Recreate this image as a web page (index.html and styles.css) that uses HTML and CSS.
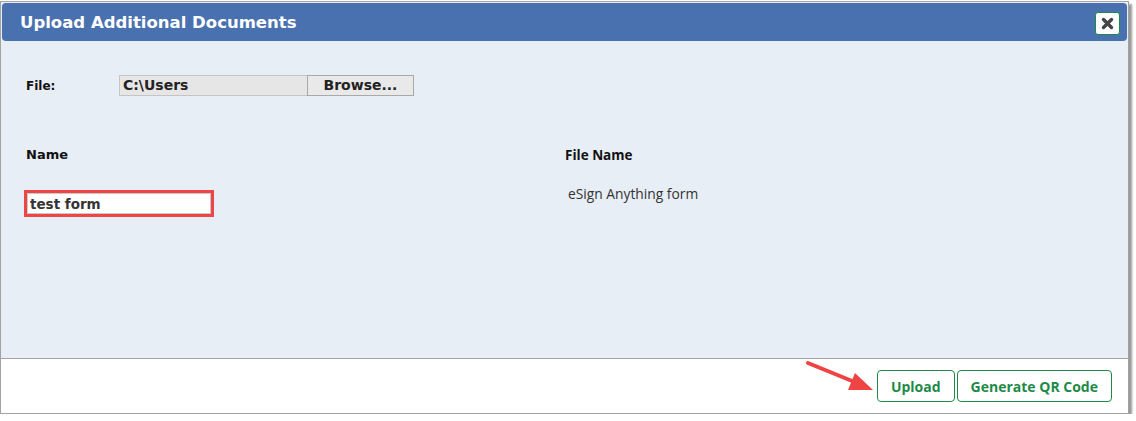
FILE: index.html
```html
<!DOCTYPE html>
<html lang="en">
<head>
    <meta charset="UTF-8">
    <title>Upload Additional Documents</title>
    <link rel="stylesheet" href="styles.css">
</head>
<body>
    <div class="dialog">
        <div class="dialog-header">
            <h1>Upload Additional Documents</h1>
            <button class="btn-close" title="Close">
                <svg width="13" height="13" viewBox="0 0 13 13">
                    <path d="M2.5 2.5 L10.5 10.5 M10.5 2.5 L2.5 10.5" stroke="#454545" stroke-width="3.4" stroke-linecap="round"/>
                </svg>
            </button>
        </div>

        <div class="dialog-body">
            <div class="file-row">
                <label class="file-label">File:</label>
                <div class="file-input">
                    <span class="file-path">C:\Users</span>
                    <span class="btn-browse">Browse...</span>
                </div>
            </div>

            <div class="doc-grid">
                <div class="doc-col">
                    <h3 class="col-title">Name</h3>
                    <div class="highlight">
                        <input type="text" class="name-input" value="test form">
                    </div>
                </div>
                <div class="doc-col">
                    <h3 class="col-title col-title-alt">File Name</h3>
                    <p class="file-name">eSign Anything form</p>
                </div>
            </div>
        </div>

        <div class="dialog-footer">
            <!-- callout arrow pointing at the upload button -->
            <svg class="callout" width="80" height="40" viewBox="0 0 80 40">
                <line x1="3" y1="3" x2="52" y2="23" stroke="#ef4444" stroke-width="4" stroke-linecap="round"/>
                <polygon points="68,30 50,13 43,30" fill="#ef4444"/>
            </svg>
            <button class="btn-action">Upload</button>
            <button class="btn-action">Generate QR Code</button>
        </div>
    </div>
</body>
</html>
```

FILE: styles.css
```css
/* Dialog screenshot styling */
body {
    margin: 0;
    background-color: #ffffff;
    font-family: "DejaVu Sans", Verdana, sans-serif;
}

.dialog {
    box-sizing: border-box;
    width: 1129px;
    height: 413px;
    margin-top: 1px;
    padding: 1px;
    border: 1px solid #a3a3a3;
    background-color: #e8eef6;
    box-shadow: 3px 3px 2px rgba(0, 0, 0, 0.4);
    display: flex;
    flex-direction: column;
}

.dialog-header {
    height: 38px;
    background-color: #4a71af;
    border-radius: 4px;
    padding: 0 7px 0 18px;
    display: flex;
    align-items: center;
    justify-content: space-between;
}

.dialog-header h1 {
    margin: 1px 0 0 0;
    color: #ffffff;
    font-size: 16.5px;
    font-weight: bold;
}

.btn-close {
    box-sizing: border-box;
    width: 25px;
    height: 23px;
    margin-top: 2px;
    padding: 0;
    background-color: #ffffff;
    border: 1px solid #1e8a47;
    border-radius: 3px;
    display: flex;
    align-items: center;
    justify-content: center;
}

.dialog-body {
    flex: 1;
    padding: 34px 24px 0 24px;
}

.file-row {
    display: flex;
    align-items: center;
}

.file-label {
    width: 93px;
    font-size: 12px;
    font-weight: bold;
    color: #111;
}

.file-input {
    display: flex;
    height: 21px;
    font-size: 14px;
    font-weight: bold;
    color: #222;
}

.file-path {
    box-sizing: border-box;
    width: 188px;
    padding-left: 3px;
    line-height: 19px;
    background-color: #e6e6e6;
    border: 1px solid #c4c4c4;
    border-right: none;
}

.btn-browse {
    box-sizing: border-box;
    width: 107px;
    line-height: 19px;
    text-align: center;
    background-color: #e9e9e9;
    border: 1px solid #a9a9a9;
}

.doc-grid {
    display: grid;
    grid-template-columns: 539px 1fr;
    margin-top: 51px;
}

.col-title {
    margin: 0;
    font-size: 13px;
    line-height: 16px;
    font-weight: bold;
    color: #111;
}

.col-title-alt {
    font-family: "Open Sans", sans-serif;
    font-size: 13.5px;
}

.highlight {
    display: inline-block;
    margin: 27px 0 0 -2px;
    border: 3px solid #f04545;
}

.name-input {
    box-sizing: border-box;
    display: block;
    width: 184px;
    height: 21px;
    margin: 0;
    padding: 0 0 0 2px;
    border: 1px solid #c9c9c9;
    background-color: #ffffff;
    font-family: "DejaVu Sans", Verdana, sans-serif;
    font-size: 13.5px;
    font-weight: bold;
    color: #333;
}

.file-name {
    margin: 21px 0 0 3px;
    font-family: "Open Sans", sans-serif;
    font-size: 13.8px;
    color: #333;
}

.dialog-footer {
    position: relative;
    height: 55px;
    border-top: 1px solid #a3a3a3;
    background-color: #ffffff;
    display: flex;
    align-items: flex-start;
    justify-content: flex-end;
    gap: 2px;
    padding: 11px 16px 0 0;
    box-sizing: border-box;
    margin: 0 -1px -1px -1px;
}

.btn-action {
    box-sizing: border-box;
    height: 32px;
    padding: 0 13px;
    background-color: #ffffff;
    border: 1px solid #1e8a47;
    border-radius: 4px;
    font-family: "Open Sans", sans-serif;
    font-size: 14px;
    font-weight: bold;
    color: #1e8a47;
}

.callout {
    position: absolute;
    left: 804px;
    top: 1px;
}
```
